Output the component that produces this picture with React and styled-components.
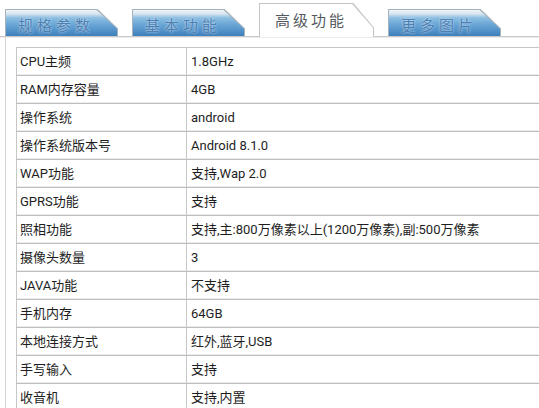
import React from "react";
import styled, { createGlobalStyle } from "styled-components";

const GlobalStyle = createGlobalStyle`
  body {
    margin: 0;
    background: #ffffff;
    font-family: Roboto, "Noto Sans CJK SC", sans-serif;
    overflow: hidden;
  }
`;

const Page = styled.div`
  width: 539px;
  height: 408px;
  overflow: hidden;
  background: #fff;
`;

const TabBar = styled.div`
  display: flex;
  align-items: flex-end;
  gap: 14px;
  height: 36px;
  padding-left: 5px;
  border-bottom: 1px solid #c9c9c9;
  box-shadow: 0 1px 0 #ececec;
`;

const Tab = styled.div`
  flex: none;
  width: ${(p) => (p.$active ? 115 : 113)}px;
  height: ${(p) => (p.$active ? 34 : 27)}px;
  margin-bottom: ${(p) => (p.$active ? -1 : 0)}px;
  background: ${(p) => (p.$active ? "#c4c4c4" : "#a9b3bb")};
  clip-path: polygon(0 0, 82% 0, 100% 72%, 100% 100%, 0 100%);
  padding: 1px 1px 0 1px;
  box-sizing: border-box;
`;

const TabFace = styled.div`
  height: 100%;
  display: flex;
  align-items: center;
  padding: ${(p) => (p.$active ? "0 0 2px 15px" : "3px 0 0 12px")};
  box-sizing: border-box;
  clip-path: polygon(0 0, 81.5% 0, 100% 72%, 100% 100%, 0 100%);
  background: ${(p) =>
    p.$active
      ? "#ffffff"
      : "linear-gradient(180deg, #eef3f7 0%, #dbe7f1 14%, #8ebfe2 30%, #6aa6d6 55%, #4d8dc6 85%, #3f7fb9 100%)"};
  font-family: "Noto Sans CJK SC", sans-serif;
  font-size: 15px;
  letter-spacing: ${(p) => (p.$active ? 3 : 4)}px;
  color: ${(p) => (p.$active ? "#555a5e" : "#4d7fb0")};
  text-shadow: ${(p) =>
    p.$active ? "none" : "0 0 2px rgba(225,240,255,0.95)"};
  white-space: nowrap;
`;

const Frame = styled.div`
  margin-left: 5px;
  border-left: 1px solid #d4d4d4;
  padding: 10px 0 0 10px;
`;

const Table = styled.table`
  border-collapse: collapse;
  width: 560px;
  font-size: 13px;
  line-height: 16px;
  color: #1e1e1e;
`;

const Row = styled.tr`
  height: 28px;
`;

const Cell = styled.td`
  height: 26px;
  padding: 0 0 0 ${(p) => (p.$value ? 4 : 3)}px;
  width: ${(p) => (p.$value ? "auto" : "166px")};
  border: 1px solid #c6c6c6;
  border-bottom-color: #bdbdbd;
  box-shadow: inset 0 -1px 0 #ededed;
  white-space: nowrap;
  vertical-align: middle;
`;

const tabs = [
  { label: "规格参数" },
  { label: "基本功能" },
  { label: "高级功能", active: true },
  { label: "更多图片" },
];

const rows = [
  ["CPU主频", "1.8GHz"],
  ["RAM内存容量", "4GB"],
  ["操作系统", "android"],
  ["操作系统版本号", "Android 8.1.0"],
  ["WAP功能", "支持,Wap 2.0"],
  ["GPRS功能", "支持"],
  ["照相功能", "支持,主:800万像素以上(1200万像素),副:500万像素"],
  ["摄像头数量", "3"],
  ["JAVA功能", "不支持"],
  ["手机内存", "64GB"],
  ["本地连接方式", "红外,蓝牙,USB"],
  ["手写输入", "支持"],
  ["收音机", "支持,内置"],
];

export default function App() {
  return (
    <Page>
      <GlobalStyle />
      <TabBar>
        {tabs.map((t) => (
          <Tab key={t.label} $active={t.active}>
            <TabFace $active={t.active}>{t.label}</TabFace>
          </Tab>
        ))}
      </TabBar>
      <Frame>
        <Table>
          <tbody>
            {rows.map(([k, v]) => (
              <Row key={k}>
                <Cell>{k}</Cell>
                <Cell $value>{v}</Cell>
              </Row>
            ))}
          </tbody>
        </Table>
      </Frame>
    </Page>
  );
}
